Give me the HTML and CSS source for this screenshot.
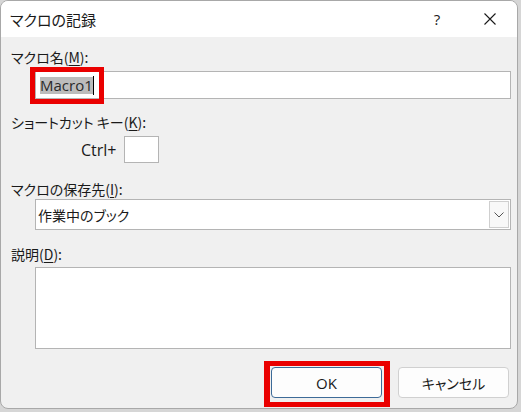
FILE: index.html
```html
<!DOCTYPE html>
<html lang="ja">
<head>
<meta charset="utf-8">
<link rel="stylesheet" href="styles.css">
</head>
<body>
<div class="dialog">
  <div class="titlebar">
    <span class="title">マクロの記録</span>
    <span class="help">?</span>
    <span class="close">
      <svg width="12" height="12" viewBox="0 0 12 12"><path d="M0.5 0.5 L11.5 11.5 M11.5 0.5 L0.5 11.5" stroke="#1a1a1a" stroke-width="1.1" fill="none"/></svg>
    </span>
  </div>
  <div class="content">
    <div class="label l1">マクロ名(<u>M</u>):</div>
    <div class="field name">
      <span class="sel">Macro1</span><span class="caret"></span>
      <span class="mark mark-name"></span>
    </div>
    <div class="label l2">ショートカット キー(<u>K</u>):</div>
    <div class="ctrlrow">
      <span class="ctrl">Ctrl+</span>
      <span class="keybox"></span>
    </div>
    <div class="label l3">マクロの保存先(<u>I</u>):</div>
    <div class="combo">
      <span class="combo-text">作業中のブック</span>
      <span class="drop">
        <svg width="10" height="6" viewBox="0 0 10 6"><path d="M0.5 0.5 L5 5 L9.5 0.5" stroke="#555" stroke-width="1" fill="none"/></svg>
      </span>
    </div>
    <div class="label l4">説明(<u>D</u>):</div>
    <div class="desc"></div>
    <div class="buttons">
      <div class="btn ok">OK<span class="mark mark-ok"></span></div>
      <div class="btn cancel">キャンセル</div>
    </div>
  </div>
</div>
</body>
</html>
```
FILE: styles.css
```css
html, body {
  margin: 0;
  padding: 0;
}
body {
  width: 521px;
  height: 412px;
  background: #d6d6d6;
  overflow: hidden;
  font-family: "Noto Sans CJK JP", "Noto Sans", sans-serif;
  font-feature-settings: "palt";
  color: #1a1a1a;
}
.dialog {
  width: 516px;
  height: 407px;
  background: #f0f0f0;
  border: 1px solid #a8a8a8;
  border-radius: 8px;
  overflow: hidden;
  display: flex;
  flex-direction: column;
}
.titlebar {
  height: 36px;
  background: #ffffff;
  display: flex;
  align-items: center;
  padding-left: 9px;
  flex-shrink: 0;
}
.title {
  font-size: 15px;
  flex: 1;
}
.help {
  font-family: "Open Sans", sans-serif;
  font-size: 15px;
  width: 20px;
  text-align: center;
  margin-right: 37px;
}
.close {
  width: 12px;
  height: 12px;
  margin-right: 21px;
  display: flex;
}
.content {
  display: flex;
  flex-direction: column;
  padding: 0 6px 0 10px;
}
.label {
  font-size: 14px;
  line-height: 18px;
  height: 18px;
}
.label u {
  text-underline-offset: 2px;
}
.l1 { margin-top: 11px; }
.l2 { margin-top: 14px; }
.l3 { margin-top: 17px; }
.l4 { margin-top: 15px; }

.field {
  position: relative;
  margin-left: 24px;
  margin-top: 5px;
  height: 28px;
  box-sizing: border-box;
  background: #fff;
  border: 1px solid #b4b4b4;
  display: flex;
  align-items: center;
  padding-left: 4px;
}
.sel {
  font-family: "Open Sans", sans-serif;
  font-size: 15px;
  line-height: 17px;
  background: #bcbcbc;
  color: #2a2a2a;
}
.caret {
  width: 1px;
  height: 19px;
  background: #000;
}
.mark {
  position: absolute;
  border: 5px solid #ea0000;
  box-sizing: border-box;
  pointer-events: none;
}
.mark-name {
  left: -6px;
  top: -5px;
  width: 74px;
  height: 37px;
}
.ctrlrow {
  display: flex;
  align-items: center;
  margin-top: 5px;
  padding-left: 70px;
  height: 27px;
}
.ctrl {
  font-family: "Open Sans", sans-serif;
  font-size: 16px;
  width: 43px;
}
.keybox {
  width: 35px;
  height: 27px;
  box-sizing: border-box;
  background: #fff;
  border: 1px solid #b4b4b4;
}
.combo {
  margin-left: 24px;
  margin-top: 1px;
  height: 31px;
  box-sizing: border-box;
  background: #fff;
  border: 1px solid #b4b4b4;
  display: flex;
  align-items: center;
}
.combo-text {
  flex: 1;
  font-size: 14px;
  padding-left: 2px;
}
.drop {
  width: 20px;
  height: 27px;
  margin-right: 1px;
  box-sizing: border-box;
  border: 1px solid #cfcfcf;
  background: #f8f8f8;
  display: flex;
  align-items: center;
  justify-content: center;
}
.desc {
  margin-left: 24px;
  margin-top: 4px;
  height: 82px;
  box-sizing: border-box;
  background: #fff;
  border: 1px solid #b4b4b4;
}
.buttons {
  display: flex;
  justify-content: flex-end;
  gap: 16px;
  margin-top: 18px;
  padding-right: 2px;
}
.btn {
  position: relative;
  width: 111px;
  height: 31px;
  box-sizing: border-box;
  border-radius: 4px;
  background: #fdfdfd;
  display: flex;
  align-items: center;
  justify-content: center;
  font-size: 15px;
}
.ok {
  border: 1px solid #3d6b98;
  font-family: "Open Sans", sans-serif;
}
.cancel {
  border: 1px solid #d0d0d0;
  font-size: 14px;
}
.mark-ok {
  left: -8px;
  top: -7px;
  width: 126px;
  height: 46px;
  border-width: 5px 6px;
}
```
